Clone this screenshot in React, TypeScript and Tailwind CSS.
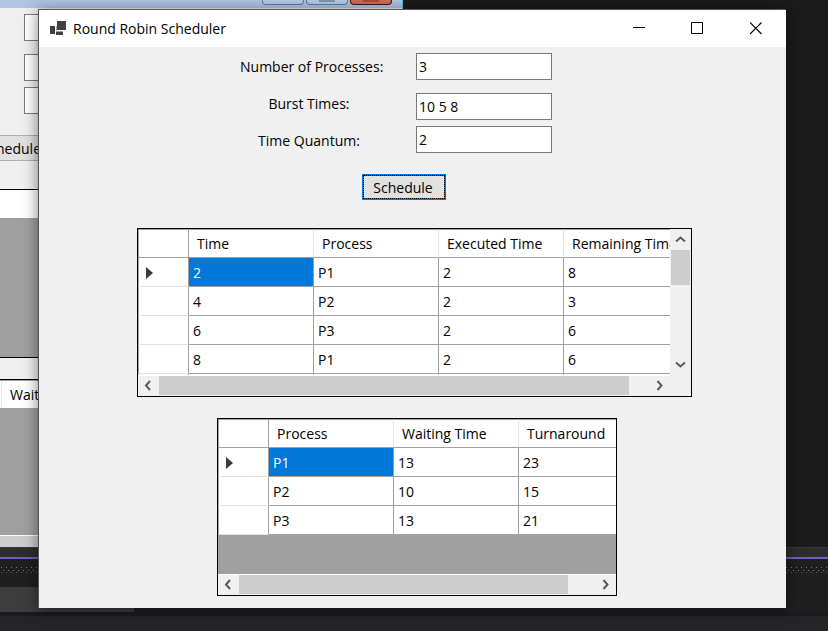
import { useState } from "react";
import type { ReactNode } from "react";

type Direction = "left" | "right" | "up" | "down";

const chevronPaths: Record<Direction, string> = {
  left: "M7 1 3 5.500l4 4.500",
  right: "M3.500 1l4 4.500-4 4.500",
  up: "M1 7.500l4.500-4 4.500 4",
  down: "M1 3.500l4.500 4 4.500-4",
};

function ScrollButton({ direction }: { direction: Direction }) {
  const size = direction === "left" || direction === "right" ? "h-[19px] w-[21px]" : "size-[21px]";
  return (
    <button
      type="button"
      aria-label={`Scroll ${direction}`}
      className={`flex shrink-0 items-center justify-center bg-[#f0f0f0] ${size}`}
    >
      <svg width="11" height="11" viewBox="0 0 11 11" fill="none" stroke="#5a5a5a" strokeWidth="2">
        <path d={chevronPaths[direction]} />
      </svg>
    </button>
  );
}

function HorizontalScroll({ thumb }: { thumb: string }) {
  return (
    <div className="flex h-[21px] border-t border-white bg-[#f0f0f0]">
      <ScrollButton direction="left" />
      <div className="flex-1">
        <div className={`h-[19px] bg-[#cdcdcd] ${thumb}`} />
      </div>
      <ScrollButton direction="right" />
    </div>
  );
}

function Grid({ label, columns, rows }: { label: string; columns: string[]; rows: string[][] }) {
  return (
    <table aria-label={label} className="w-max table-fixed border-separate border-spacing-0 bg-white text-left">
      <thead>
        <tr className="h-[29px]">
          <td className="w-[51px] border-r border-b border-t border-l border-[#a0a0a0] p-0" />
          {columns.map((column) => (
            <th
              key={column}
              scope="col"
              className="w-[125px] border-t border-r border-b border-t-[#a0a0a0] border-r-[#e3e3e3] border-b-[#a0a0a0] py-0 pr-0 pl-2 font-normal whitespace-nowrap"
            >
              {column}
            </th>
          ))}
        </tr>
      </thead>
      <tbody>
        {rows.map((row, r) => (
          <tr key={r} className="h-[29px]">
            <td className="border-r border-b border-l border-[#e3e3e3] border-r-[#a0a0a0] border-l-[#a0a0a0] pt-[2px] pr-0 pb-0 pl-[7px]">
              {r === 0 && (
                <svg width="7" height="12" viewBox="0 0 7 12" fill="#3c3c3c">
                  <path d="M0 0l7 6-7 6z" />
                </svg>
              )}
            </td>
            {row.map((cell, c) => (
              <td
                key={c}
                className={`border-r border-b border-[#a0a0a0] pt-[2px] pr-0 pb-0 pl-1 ${
                  r === 0 && c === 0 ? "bg-[#0078d7] text-white" : ""
                }`}
              >
                {cell}
              </td>
            ))}
          </tr>
        ))}
      </tbody>
    </table>
  );
}

function Field({ id, value, onChange }: { id: string; value: string; onChange: (v: string) => void }) {
  return (
    <input
      id={id}
      type="text"
      value={value}
      onChange={(e) => onChange(e.target.value)}
      className="h-[27px] w-[136px] border border-[#7a7a7a] bg-white px-[2px] outline-none"
    />
  );
}

function CaptionButton({ label, children }: { label: string; children: ReactNode }) {
  return (
    <button type="button" aria-label={label} className="flex h-[37px] w-[59px] items-center justify-center">
      <svg width="13" height="13" viewBox="0 0 13 13" fill="none" stroke="#000" strokeWidth="1">
        {children}
      </svg>
    </button>
  );
}

/* Editor frame that shows around the form windows */
function EditorBackdrop() {
  return (
    <div className="flex h-full flex-col bg-[#1b1b1b]">
      <div className="h-[547px] shrink-0" />
      <div className="h-[10px] shrink-0 border-t border-[#3a3a3a] bg-[#2d2d2d]" />
      <div className="h-[2px] shrink-0 bg-[#7160b8]" />
      <div className="h-[28px] shrink-0 bg-[#1f1f1f] pt-2">
        <svg width="100%" height="7">
          <defs>
            <pattern id="grip" width="5" height="6" patternUnits="userSpaceOnUse">
              <path d="M1 0h1v1H1zM3 3h1v1H3z" fill="#777" />
              <path d="M1 5h1v1H1z" fill="#5a5a5a" />
            </pattern>
          </defs>
          <rect width="100%" height="6" fill="url(#grip)" />
        </svg>
      </div>
      <div className="h-[25px] shrink-0 bg-[#1f1f1f]">
        <div className="h-full w-[134px] bg-[#3d3d3d]" />
      </div>
      <div className="h-[4px] shrink-0 bg-[#1b1b1b]" />
      <div className="flex-1 bg-[#252528]" />
    </div>
  );
}

/* Second form, mostly hidden behind the active one */
function BackgroundForm() {
  return (
    <div className="absolute top-0 left-0 h-[547px] w-[403px] overflow-hidden border-r border-[#4fc3dc] bg-[#f0f0f0]">
      <div className="flex h-2 justify-end gap-[2px] bg-[#aec6e2] pr-[10px]">
        <div className="h-[5px] w-[42px] rounded-b-sm border border-t-0 border-[#5f7fa5] bg-[#b5cce6]" />
        <div className="h-[5px] w-[42px] rounded-b-sm border border-t-0 border-[#5f7fa5] bg-[#b5cce6] px-3">
          <div className="h-[2px] bg-[#8494aa]" />
        </div>
        <div className="h-[5px] w-[42px] rounded-b-sm border border-t-0 border-[#4a1010] bg-[#cf6a58] px-3">
          <div className="h-[2px] bg-[#b04a3c]" />
        </div>
      </div>
      <div className="mt-[6px] ml-6 h-[27px] w-[136px] border border-[#7a7a7a] bg-white" />
      <div className="mt-[13px] ml-6 h-[27px] w-[136px] border border-[#7a7a7a] bg-white" />
      <div className="mt-[6px] ml-6 h-[27px] w-[136px] border border-[#7a7a7a] bg-white" />
      <div className="mt-[21px] -ml-2 flex h-[26px] w-[58px] items-center border-y border-[#adadad] bg-[#e1e1e1] pt-[2px] pl-1">
        hedule
      </div>
      <div className="mt-[28px] h-[169px] border-y border-black bg-[#a0a0a0]">
        <div className="h-7 bg-white" />
      </div>
      <div className="mt-[21px] h-[168px] border-t border-black bg-[#a0a0a0]">
        <div className="flex h-7 border-t border-[#a0a0a0] bg-white pl-px">
          <div className="flex items-center border-l border-[#e3e3e3] pl-2">Wait</div>
        </div>
        <div className="mt-[127px] h-3 border-t border-white bg-[#cdcdcd]" />
      </div>
    </div>
  );
}

const scheduleRows = [
  ["2", "P1", "2", "8"],
  ["4", "P2", "2", "3"],
  ["6", "P3", "2", "6"],
  ["8", "P1", "2", "6"],
  ["", "", "", ""],
];

const summaryRows = [
  ["P1", "13", "23"],
  ["P2", "10", "15"],
  ["P3", "13", "21"],
];

export default function App() {
  const [count, setCount] = useState("3");
  const [bursts, setBursts] = useState("10 5 8");
  const [quantum, setQuantum] = useState("2");

  return (
    <div className="relative min-h-screen overflow-hidden pt-[9px] pr-[42px] pb-[23px] pl-[38px] font-['Open_Sans','Noto_Sans',sans-serif] text-[14px] leading-5 text-black">
      <div className="absolute inset-0">
        <EditorBackdrop />
        <BackgroundForm />
      </div>

      <main className="relative border-t border-l border-[#555] bg-[#f0f0f0] shadow-[0_2px_14px_rgba(0,0,0,0.5)]">
        <header className="flex h-[37px] items-center bg-white pl-[11px]">
          <svg width="16" height="16" viewBox="0 0 16 16" fill="#404040">
            <path d="M0 5h5v8H0zM7 0h9v9H7zM6 10.500h7v3.500H6z" />
            <path d="M6 5h1v5H6z" fill="#a8a8a8" />
          </svg>
          <h1 className="flex-1 pl-[7px]">Round Robin Scheduler</h1>
          <CaptionButton label="Minimize">
            <path d="M1 5.500h12" />
          </CaptionButton>
          <CaptionButton label="Maximize">
            <path d="M.5.5h11v11H.5z" />
          </CaptionButton>
          <CaptionButton label="Close">
            <path d="M0 .5l11.500 11.500M11.500.5L0 12" strokeWidth="1.100" />
          </CaptionButton>
        </header>

        <form onSubmit={(e) => e.preventDefault()}>
          <div className="flex justify-center gap-[34px] pr-[33px]">
            <div className="flex w-[142px] flex-col pt-px text-center leading-[37px] whitespace-nowrap">
              <label htmlFor="count">Number of Processes:</label>
              <label htmlFor="bursts" className="pr-1">
                Burst Times:
              </label>
              <label htmlFor="quantum" className="pr-1">
                Time Quantum:
              </label>
            </div>
            <div className="flex flex-col gap-[6px] pt-[6px]">
              <Field id="count" value={count} onChange={setCount} />
              <div className="pt-[7px]">
                <Field id="bursts" value={bursts} onChange={setBursts} />
              </div>
              <Field id="quantum" value={quantum} onChange={setQuantum} />
            </div>
          </div>
          <div className="flex justify-center pt-[15px] pr-[17px]">
            <button
              type="submit"
              className="h-[26px] w-[84px] border-2 border-[#0078d7] bg-[#e1e1e1] pt-px pr-[2px] outline outline-1 -outline-offset-2 outline-black outline-dotted"
            >
              Schedule
            </button>
          </div>
        </form>

        <div className="flex justify-center pt-7 pl-1">
          <section className="flex w-[555px] border border-black bg-[#f0f0f0]">
            <div className="w-[532px]">
              <div className="h-[146px] overflow-hidden bg-white">
                <Grid
                  label="Schedule"
                  columns={["Time", "Process", "Executed Time", "Remaining Time"]}
                  rows={scheduleRows}
                />
              </div>
              <HorizontalScroll thumb="w-[470px]" />
            </div>
            <div className="flex h-[146px] w-[21px] flex-col">
              <ScrollButton direction="up" />
              <div className="flex-1">
                <div className="ml-px h-[35px] w-[19px] bg-[#cdcdcd]" />
              </div>
              <ScrollButton direction="down" />
            </div>
          </section>
        </div>

        <div className="flex justify-center pt-[21px] pb-3 pl-[9px]">
          <section className="w-[400px] border border-black bg-[#a0a0a0]">
            <div className="h-[155px] overflow-hidden">
              <Grid label="Summary" columns={["Process", "Waiting Time", "Turnaround"]} rows={summaryRows} />
            </div>
            <HorizontalScroll thumb="w-[329px]" />
          </section>
        </div>
      </main>
    </div>
  );
}
